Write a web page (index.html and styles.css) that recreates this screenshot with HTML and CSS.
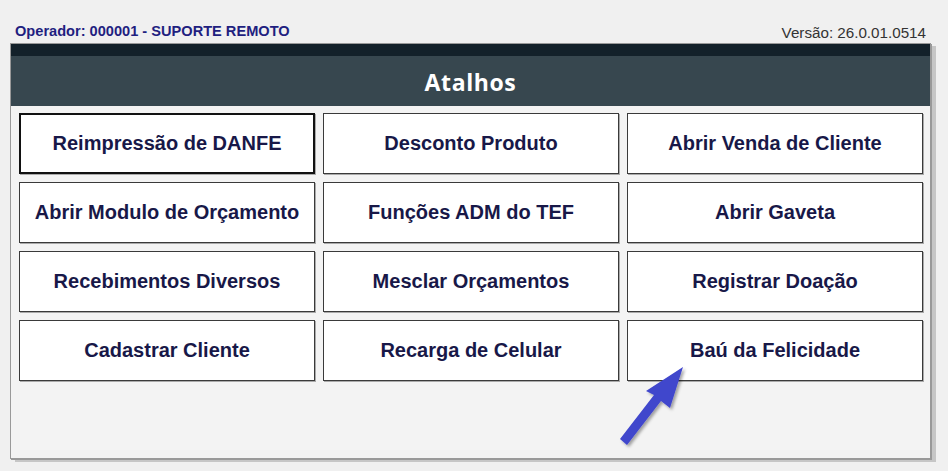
FILE: index.html
```html
<!DOCTYPE html>
<html lang="pt-BR">
<head>
<meta charset="utf-8">
<title>Atalhos</title>
<link rel="stylesheet" href="styles.css">
</head>
<body>
<div class="topbar">
  <span class="operator">Operador: 000001 - SUPORTE REMOTO</span>
  <span class="version">Versão: 26.0.01.0514</span>
</div>
<div class="panel">
  <div class="strip"></div>
  <div class="header">Atalhos</div>
  <div class="grid">
    <button class="btn focused">Reimpressão de DANFE</button>
    <button class="btn">Desconto Produto</button>
    <button class="btn">Abrir Venda de Cliente</button>
    <button class="btn">Abrir Modulo de Orçamento</button>
    <button class="btn">Funções ADM do TEF</button>
    <button class="btn">Abrir Gaveta</button>
    <button class="btn">Recebimentos Diversos</button>
    <button class="btn">Mesclar Orçamentos</button>
    <button class="btn">Registrar Doação</button>
    <button class="btn">Cadastrar Cliente</button>
    <button class="btn">Recarga de Celular</button>
    <button class="btn">Baú da Felicidade</button>
  </div>
</div>
<svg class="arrow" width="948" height="471" viewBox="0 0 948 471" aria-hidden="true">
  <defs>
    <filter id="sh" x="-20%" y="-20%" width="140%" height="140%">
      <feDropShadow dx="2" dy="2" stdDeviation="1.5" flood-color="#000" flood-opacity="0.35"/>
    </filter>
  </defs>
  <g filter="url(#sh)" fill="#4046cc">
    <polygon points="683,367 670,408 661,401 627,445 620,439 654,395 646,391"/>
  </g>
</svg>
</body>
</html>
```
FILE: styles.css
```css
html, body {
  margin: 0;
  padding: 0;
}
body {
  width: 948px;
  height: 471px;
  overflow: hidden;
  background: #f0f0f0;
  font-family: "Liberation Sans", Arial, sans-serif;
  position: relative;
}
.topbar {
  height: 43px;
  display: flex;
  justify-content: space-between;
  align-items: flex-end;
  padding: 0 22px 0 15px;
  box-sizing: border-box;
}
.operator {
  font-weight: bold;
  font-size: 14.6px;
  line-height: 17px;
  color: #1f1f80;
  padding-bottom: 3px;
}
.version {
  font-size: 15.2px;
  line-height: 17px;
  color: #333;
  padding-bottom: 2px;
}
.panel {
  margin-left: 10px;
  width: 919px;
  height: 414px;
  border: 1px solid #999;
  background: #f3f3f3;
  box-shadow: 1px 1px 0 #999, 5px 3px 0 #c6c6c6;
}
.strip {
  height: 12px;
  background: #13212a;
}
.header {
  height: 50px;
  background: #37474f;
  color: #fff;
  font-family: "Open Sans", sans-serif;
  font-weight: 700;
  font-size: 23px;
  letter-spacing: 0.6px;
  line-height: 52px;
  text-align: center;
}
.grid {
  display: grid;
  grid-template-columns: repeat(3, 296px);
  grid-auto-rows: 61px;
  gap: 8px;
  padding: 7px 0 0 8px;
}
.btn {
  background: #fff;
  border: 1px solid #3a3a3a;
  box-shadow: 1px 1px 0 #aaa;
  font-family: "Liberation Sans", Arial, sans-serif;
  font-weight: bold;
  font-size: 20px;
  color: #181848;
  padding: 0;
  margin: 0;
  cursor: pointer;
}
.btn.focused {
  border: 2px solid #111;
}
.arrow {
  position: absolute;
  left: 0;
  top: 0;
  pointer-events: none;
}
```
